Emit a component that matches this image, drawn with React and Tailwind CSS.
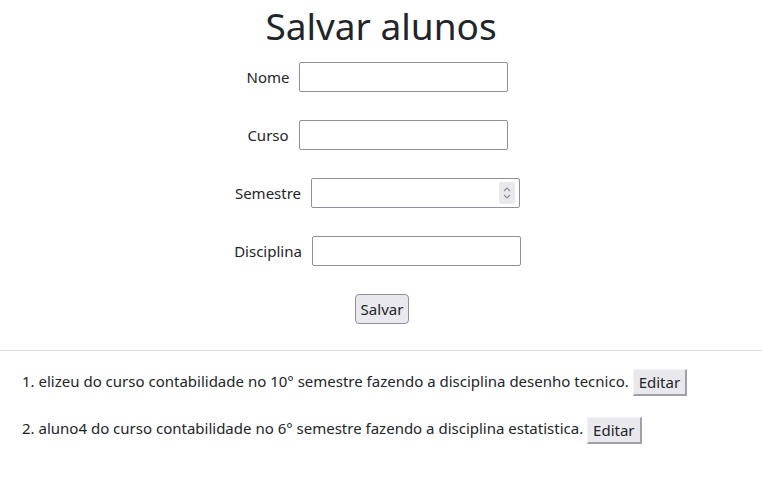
const fields = [
  { label: "Nome", type: "text" },
  { label: "Curso", type: "text" },
  { label: "Semestre", type: "number" },
  { label: "Disciplina", type: "text" },
];

const alunos = [
  { nome: "elizeu", curso: "contabilidade", semestre: 10, disciplina: "desenho tecnico" },
  { nome: "aluno4", curso: "contabilidade", semestre: 6, disciplina: "estatistica" },
];

function Spinner() {
  return (
    <span className="flex h-[22px] w-[16px] flex-col items-center justify-center rounded-[2px] bg-[#e9e9ed]">
      <svg width="8" height="14" viewBox="0 0 8 14" fill="none" stroke="#8b8b94" strokeWidth="1.2">
        <path d="M1 5 L4 2 L7 5" />
        <path d="M1 9 L4 12 L7 9" />
      </svg>
    </span>
  );
}

export default function App() {
  return (
    <div className="min-h-[479px] bg-white text-[#212529] font-['Noto_Sans',sans-serif]">
      <h1 className="pt-[2px] text-center text-[37px] leading-[47px]">Salvar alunos</h1>
      <form className="mt-[13px] flex flex-col items-center gap-[28px]">
        {fields.map((f) => (
          <div key={f.label} className="flex items-center gap-[10px] pl-[1px] pr-[8px] text-[15px]">
            <label>{f.label}</label>
            <div className="flex h-[30px] w-[209px] items-center justify-end rounded-[2px] border border-[#8f8f9d] bg-white pr-[4px]">
              {f.type === "number" && <Spinner />}
            </div>
          </div>
        ))}
        <button
          type="button"
          className="ml-[2px] h-[30px] w-[54px] rounded-[4px] border border-[#8f8f9d] bg-[#e9e9ed] text-[15px]"
        >
          Salvar
        </button>
      </form>
      <hr className="mt-[26px] border-t border-[#dcdcdc]" />
      <ol className="mt-[17px] flex list-inside list-decimal flex-col gap-[19px] pl-[22px] text-[15px]">
        {alunos.map((a) => (
          <li key={a.nome} className="leading-[27px]">
            {a.nome} do curso {a.curso} no {a.semestre}° semestre fazendo a disciplina {a.disciplina}.{" "}
            <button
              type="button"
              className="inline-block h-[27px] border-t border-l border-b-2 border-r-2 border-t-[#f4f4f6] border-l-[#f4f4f6] border-b-[#a0a0a8] border-r-[#a0a0a8] bg-[#e9e9ed] px-[5px] align-middle leading-[22px]"
            >
              Editar
            </button>
          </li>
        ))}
      </ol>
    </div>
  );
}
